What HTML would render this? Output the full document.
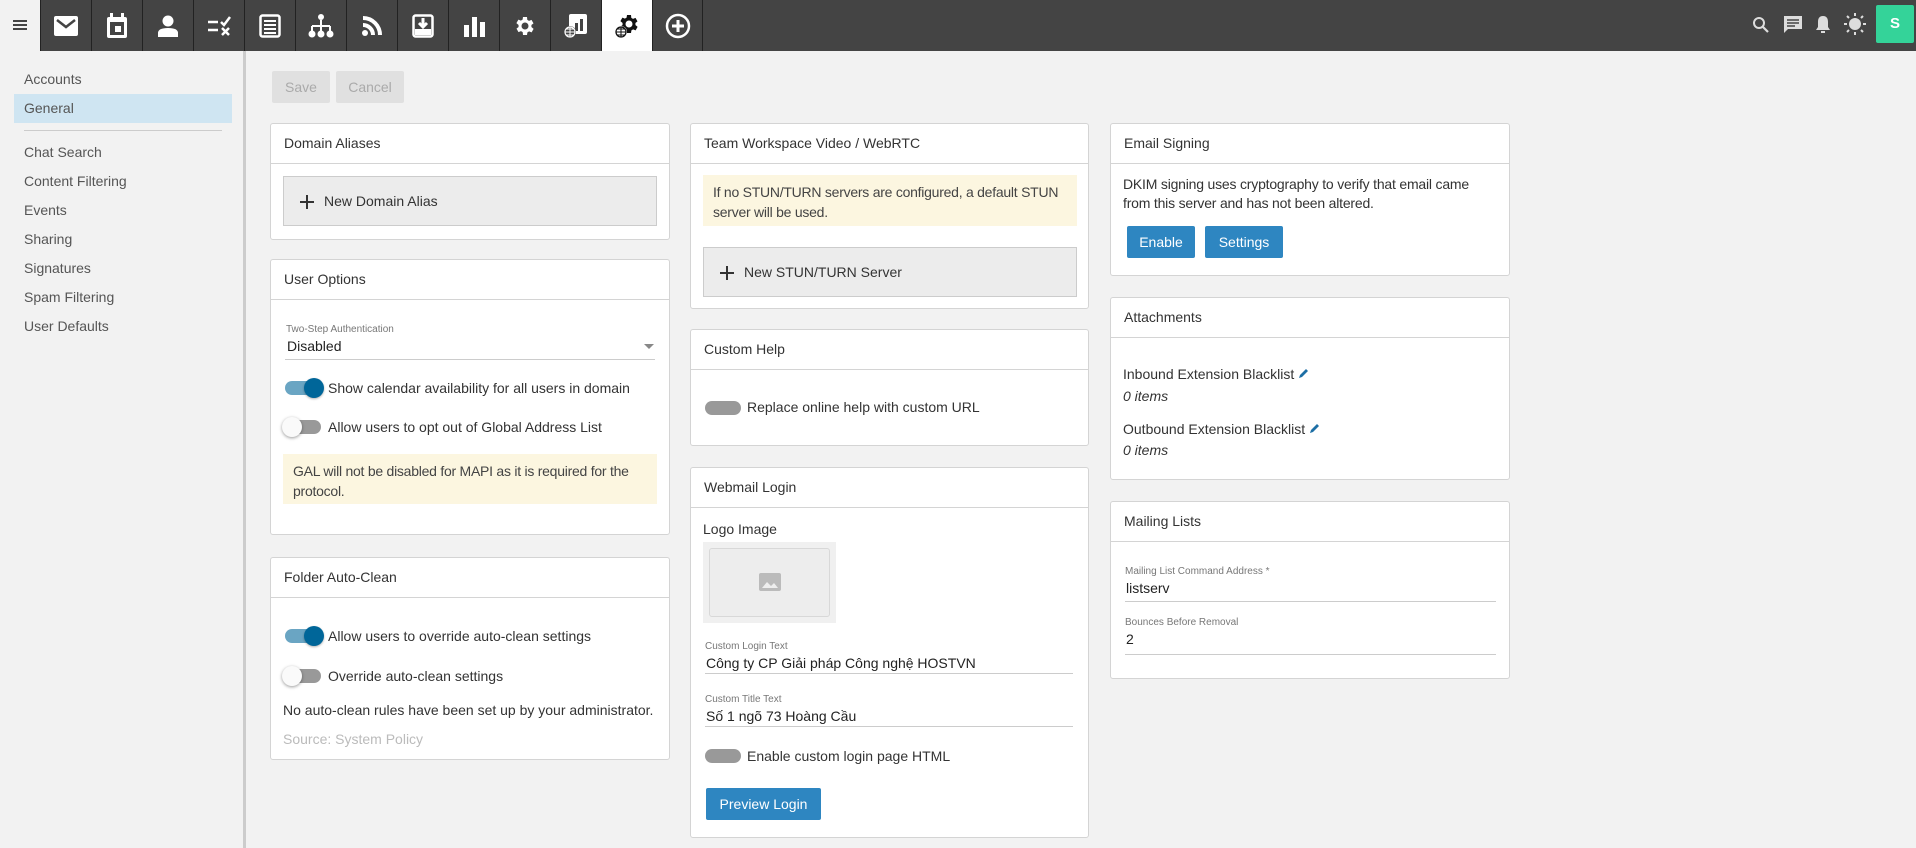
<!DOCTYPE html>
<html><head><meta charset="utf-8"><style>
*{box-sizing:border-box;margin:0;padding:0}
body{width:1916px;height:848px;overflow:hidden;background:#f2f2f2;font-family:"Liberation Sans","Noto Sans CJK SC",sans-serif;color:#333;font-size:14px;position:relative}
.top{position:absolute;left:0;top:0;width:1916px;height:51px;background:#444}
.ham{position:absolute;left:0;top:0;width:40px;height:51px;background:#f2f2f2}
.tab{position:absolute;top:0;width:51px;height:51px;border-left:1px solid #222;display:flex;align-items:center;justify-content:center}
.tab.act{background:#fff}
.side{position:absolute;left:0;top:51px;width:246px;height:797px;background:#f2f2f2;border-right:3px solid #ccc}
.si{position:absolute;left:24px;font-size:14px;color:#555;line-height:16px}
.btn{position:absolute;height:32px;line-height:32px;text-align:center;font-size:14px;border-radius:2px}
.card{position:absolute;background:#fff;border:1px solid #d4d4d4;border-radius:3px}
.card .h{height:40px;line-height:39px;padding-left:13px;border-bottom:1px solid #d4d4d4;font-size:14px;color:#333}
.a{position:absolute}
.add{position:absolute;background:#ececec;border:1px solid #ccc;height:50px;line-height:48px;padding-left:40px;font-size:14px;color:#333}
.add svg{position:absolute;left:16px;top:18px}
.note{position:absolute;background:#fcf6e0;font-size:14px;line-height:20px;padding:7px 10px;color:#444;letter-spacing:-0.25px}
.tg{position:absolute;width:36px;height:14px;border-radius:7px;background:#999}
.tg.on{background:#6aa5c3}
.tg.on:after{content:"";position:absolute;right:-3px;top:-3px;width:20px;height:20px;border-radius:50%;background:#006699;box-shadow:0 1px 2px rgba(0,0,0,.3)}
.tg.off:after{content:"";position:absolute;left:-3px;top:-3px;width:20px;height:20px;border-radius:50%;background:#fafafa;box-shadow:0 1px 3px rgba(0,0,0,.4)}
.lbl{position:absolute;font-size:10px;color:#777}
.val{position:absolute;font-size:14px;color:#222}
.ul{position:absolute;height:1px;background:#ccc}
.blue{background:#2e86c1;color:#fff}
</style></head><body>
<div class="top">
<div class="ham"><div style="position:absolute;left:13px;top:20px;width:14px;height:2px;background:#444;box-shadow:0 4px 0 #444,0 8px 0 #444"></div></div>
<div class="tab" style="left:40px"><svg width="26" height="22" viewBox="0 0 26 22"><rect x="1" y="1" width="24" height="20" rx="2" fill="#fff"/><path d="M4 5 L13 12 L22 5" stroke="#444" stroke-width="2.5" fill="none"/></svg></div>
<div class="tab" style="left:91px"><svg width="22" height="26" viewBox="0 0 22 26"><rect x="1" y="4" width="20" height="21" rx="2" fill="#fff"/><rect x="4" y="9" width="14" height="13" fill="#444"/><rect x="9" y="13" width="6" height="6" fill="#fff"/><rect x="4" y="0" width="3" height="5" fill="#fff"/><rect x="15" y="0" width="3" height="5" fill="#fff"/></svg></div>
<div class="tab" style="left:142px"><svg width="22" height="22" viewBox="0 0 22 22"><circle cx="11" cy="6" r="5.5" fill="#fff"/><path d="M1 22 V18 Q1 13 11 13 Q21 13 21 18 V22Z" fill="#fff"/></svg></div>
<div class="tab" style="left:193px"><svg width="26" height="22" viewBox="0 0 26 22"><path d="M2 7h10M2 15h10" stroke="#fff" stroke-width="2.5"/><path d="M15 7l3 3 6-8" stroke="#fff" stroke-width="2.5" fill="none"/><path d="M16 13l7 7M23 13l-7 7" stroke="#fff" stroke-width="2.5"/></svg></div>
<div class="tab" style="left:244px"><svg width="22" height="24" viewBox="0 0 22 24"><rect x="1.5" y="1.5" width="19" height="21" rx="2" fill="none" stroke="#fff" stroke-width="2.5"/><path d="M5 7h12M5 11h12M5 15h12M5 19h12" stroke="#fff" stroke-width="2"/></svg></div>
<div class="tab" style="left:295px"><svg width="26" height="24" viewBox="0 0 26 24"><circle cx="13" cy="3" r="3" fill="#fff"/><path d="M13 6v6M4 12h18M4 12v6M13 12v6M22 12v6" stroke="#fff" stroke-width="2"/><circle cx="4" cy="20" r="3.5" fill="#fff"/><circle cx="13" cy="20" r="3.5" fill="#fff"/><circle cx="22" cy="20" r="3.5" fill="#fff"/></svg></div>
<div class="tab" style="left:346px"><svg width="22" height="22" viewBox="0 0 22 22"><circle cx="4" cy="18" r="3" fill="#fff"/><path d="M2 10a10 10 0 0 1 10 10M2 3a17 17 0 0 1 17 17" stroke="#fff" stroke-width="4" fill="none"/></svg></div>
<div class="tab" style="left:397px"><svg width="22" height="24" viewBox="0 0 22 24"><rect x="1.5" y="1.5" width="19" height="21" rx="2" fill="none" stroke="#fff" stroke-width="2.5"/><rect x="3" y="15" width="16" height="6" fill="#fff"/><path d="M11 4v8M7 9l4 4 4-4" stroke="#fff" stroke-width="3" fill="none"/></svg></div>
<div class="tab" style="left:448px"><svg width="22" height="22" viewBox="0 0 22 22"><rect x="1" y="10" width="5" height="12" fill="#fff"/><rect x="9" y="2" width="5" height="20" fill="#fff"/><rect x="17" y="7" width="5" height="15" fill="#fff"/></svg></div>
<div class="tab" style="left:499px"><svg width="24" height="24" viewBox="0 0 24 24"><path fill="#fff" d="M19.4 13a7.5 7.5 0 0 0 0-2l2.1-1.6-2-3.5-2.5 1a7 7 0 0 0-1.7-1L15 3h-4l-.4 2.6a7 7 0 0 0-1.7 1l-2.5-1-2 3.5L6.6 11a7.5 7.5 0 0 0 0 2l-2.1 1.6 2 3.5 2.5-1a7 7 0 0 0 1.7 1L11 21h4l.4-2.6a7 7 0 0 0 1.7-1l2.5 1 2-3.5zM13 15.5a3.5 3.5 0 1 1 0-7 3.5 3.5 0 0 1 0 7z" transform="translate(-1 0)"/></svg></div>
<div class="tab" style="left:550px"><svg width="26" height="26" viewBox="0 0 26 26"><rect x="6" y="1" width="18" height="20" rx="2" fill="#fff"/><rect x="12" y="10" width="3" height="8" fill="#444"/><rect x="17" y="6" width="3" height="12" fill="#444"/><circle cx="7" cy="19" r="6" fill="#444"/><circle cx="7" cy="19" r="5" fill="none" stroke="#fff" stroke-width="1.2"/><path d="M2 19h10M7 14v10M3 16h8M3 22h8" stroke="#fff" stroke-width="1"/></svg></div>
<div class="tab act" style="left:601px"><svg width="28" height="28" viewBox="0 0 28 28"><path fill="#111" d="M22.4 13a7.5 7.5 0 0 0 0-2l2.1-1.6-2-3.5-2.5 1a7 7 0 0 0-1.7-1L18 3h-4l-.4 2.6a7 7 0 0 0-1.7 1l-2.5-1-2 3.5L9.6 11a7.5 7.5 0 0 0 0 2l-2.1 1.6 2 3.5 2.5-1a7 7 0 0 0 1.7 1L14 21h4l.4-2.6a7 7 0 0 0 1.7-1l2.5 1 2-3.5zM16 15.5a3.5 3.5 0 1 1 0-7 3.5 3.5 0 0 1 0 7z"/><circle cx="8" cy="20" r="6" fill="#fff"/><circle cx="8" cy="20" r="5" fill="none" stroke="#111" stroke-width="1.3"/><path d="M3 20h10M8 15v10M4 17h8M4 23h8" stroke="#111" stroke-width="1"/></svg></div>
<div class="tab" style="left:652px;border-right:1px solid #222"><svg width="26" height="26" viewBox="0 0 26 26"><circle cx="13" cy="13" r="11" fill="none" stroke="#fff" stroke-width="2.5"/><path d="M13 7v12M7 13h12" stroke="#fff" stroke-width="3"/></svg></div>
<svg class="a" style="left:1752px;top:16px" width="18" height="18" viewBox="0 0 18 18"><circle cx="7" cy="7" r="5" fill="none" stroke="#ddd" stroke-width="2"/><path d="M11 11l5 5" stroke="#ddd" stroke-width="2.2"/></svg>
<svg class="a" style="left:1783px;top:15px" width="20" height="20" viewBox="0 0 20 20"><path d="M1 1h18v13H5l-4 4z" fill="#ddd"/><path d="M4 5h12M4 8h12M4 11h8" stroke="#444" stroke-width="1.5"/></svg>
<svg class="a" style="left:1815px;top:15px" width="16" height="20" viewBox="0 0 16 20"><path d="M8 1c-4 0-5 3-5 6v5l-2 3h14l-2-3V7c0-3-1-6-5-6z" fill="#ddd"/><rect x="6" y="16" width="4" height="2" fill="#ddd"/></svg>
<svg class="a" style="left:1844px;top:13px" width="22" height="22" viewBox="0 0 22 22"><circle cx="11" cy="11" r="6" fill="#ddd"/><path d="M11 0v3M11 19v3M0 11h3M19 11h3M3 3l2 2M17 17l2 2M3 19l2-2M17 5l2-2" stroke="#ddd" stroke-width="2"/></svg>
<div class="a" style="left:1876px;top:5px;width:38px;height:38px;background:#34d399;border-radius:2px;color:#fff;font-weight:bold;font-size:15px;text-align:center;line-height:38px">S</div>
</div>

<div class="side">
<div class="si" style="top:20px">Accounts</div>
<div class="a" style="left:14px;top:43px;width:218px;height:29px;background:#cfe5f2"></div>
<div class="si" style="top:49px">General</div>
<div class="a" style="left:24px;top:79px;width:198px;height:1px;background:#ccc"></div>
<div class="si" style="top:93px">Chat Search</div>
<div class="si" style="top:122px">Content Filtering</div>
<div class="si" style="top:151px">Events</div>
<div class="si" style="top:180px">Sharing</div>
<div class="si" style="top:209px">Signatures</div>
<div class="si" style="top:238px">Spam Filtering</div>
<div class="si" style="top:267px">User Defaults</div>
</div>

<div class="btn" style="left:272px;top:71px;width:58px;background:#e0e0e0;color:#aaa">Save</div>
<div class="btn" style="left:336px;top:71px;width:68px;background:#e0e0e0;color:#aaa">Cancel</div>

<!-- column 1 -->
<div class="card" style="left:270px;top:123px;width:400px;height:117px"><div class="h">Domain Aliases</div>
<div class="add" style="left:12px;top:52px;width:374px"><svg width="14" height="14" viewBox="0 0 14 14"><path d="M7 0v14M0 7h14" stroke="#333" stroke-width="2"/></svg>New Domain Alias</div></div>

<div class="card" style="left:270px;top:259px;width:400px;height:276px"><div class="h">User Options</div>
<div class="lbl" style="left:15px;top:64px">Two-Step Authentication</div>
<div class="val" style="left:16px;top:78px">Disabled</div>
<div class="a" style="left:373px;top:84px;width:0;height:0;border-left:5px solid transparent;border-right:5px solid transparent;border-top:5px solid #888"></div>
<div class="ul" style="left:14px;top:99px;width:370px"></div>
<div class="tg on" style="left:14px;top:121px"></div>
<div class="val" style="left:57px;top:120px;color:#333">Show calendar availability for all users in domain</div>
<div class="tg off" style="left:14px;top:160px;background:#999"></div>
<div class="val" style="left:57px;top:159px;color:#333">Allow users to opt out of Global Address List</div>
<div class="note" style="left:12px;top:194px;width:374px;height:50px">GAL will not be disabled for MAPI as it is required for the protocol.</div>
</div>

<div class="card" style="left:270px;top:557px;width:400px;height:203px"><div class="h">Folder Auto-Clean</div>
<div class="tg on" style="left:14px;top:71px"></div>
<div class="val" style="left:57px;top:70px;color:#333">Allow users to override auto-clean settings</div>
<div class="tg off" style="left:14px;top:111px"></div>
<div class="val" style="left:57px;top:110px;color:#333">Override auto-clean settings</div>
<div class="val" style="left:12px;top:144px;color:#333">No auto-clean rules have been set up by your administrator.</div>
<div class="val" style="left:12px;top:173px;color:#bbb">Source: System Policy</div>
</div>

<!-- column 2 -->
<div class="card" style="left:690px;top:123px;width:399px;height:186px"><div class="h">Team Workspace Video / WebRTC</div>
<div class="note" style="left:12px;top:51px;width:374px;height:51px">If no STUN/TURN servers are configured, a default STUN server will be used.</div>
<div class="add" style="left:12px;top:123px;width:374px"><svg width="14" height="14" viewBox="0 0 14 14"><path d="M7 0v14M0 7h14" stroke="#333" stroke-width="2"/></svg>New STUN/TURN Server</div></div>

<div class="card" style="left:690px;top:329px;width:399px;height:117px"><div class="h">Custom Help</div>
<div class="tg" style="left:14px;top:71px"></div>
<div class="val" style="left:56px;top:69px;color:#333">Replace online help with custom URL</div></div>

<div class="card" style="left:690px;top:467px;width:399px;height:371px"><div class="h">Webmail Login</div>
<div class="val" style="left:12px;top:53px;color:#333">Logo Image</div>
<div class="a" style="left:12px;top:74px;width:133px;height:81px;background:#f0f0f0"></div>
<div class="a" style="left:18px;top:80px;width:121px;height:69px;background:#ededed;border:1px solid #d8d8d8;border-radius:3px"></div>
<svg class="a" style="left:68px;top:105px" width="22" height="18" viewBox="0 0 22 18"><rect width="22" height="18" rx="2" fill="#bbb"/><path d="M3 15l5-6 4 4 3-3 4 5z" fill="#eee"/></svg>
<div class="lbl" style="left:14px;top:173px">Custom Login Text</div>
<div class="val" style="left:15px;top:187px">Công ty CP Giải pháp Công nghệ HOSTVN</div>
<div class="ul" style="left:14px;top:205px;width:368px"></div>
<div class="lbl" style="left:14px;top:226px">Custom Title Text</div>
<div class="val" style="left:15px;top:240px">Số 1 ngõ 73 Hoàng Cầu</div>
<div class="ul" style="left:14px;top:258px;width:368px"></div>
<div class="tg" style="left:14px;top:281px"></div>
<div class="val" style="left:56px;top:280px;color:#333">Enable custom login page HTML</div>
<div class="btn blue" style="left:15px;top:320px;width:115px">Preview Login</div>
</div>

<!-- column 3 -->
<div class="card" style="left:1110px;top:123px;width:400px;height:153px"><div class="h">Email Signing</div>
<div class="val" style="left:12px;top:51px;line-height:19px;color:#333;width:368px;letter-spacing:-0.2px">DKIM signing uses cryptography to verify that email came from this server and has not been altered.</div>
<div class="btn blue" style="left:16px;top:102px;width:68px">Enable</div>
<div class="btn blue" style="left:94px;top:102px;width:78px">Settings</div></div>

<div class="card" style="left:1110px;top:297px;width:400px;height:183px"><div class="h">Attachments</div>
<div class="val" style="left:12px;top:68px;color:#333">Inbound Extension Blacklist <svg width="12" height="12" viewBox="0 0 12 12"><path d="M1 11l1-3 6-6 2 2-6 6z" fill="#1d6fa5"/></svg></div>
<div class="val" style="left:12px;top:90px;color:#333;font-style:italic">0 items</div>
<div class="val" style="left:12px;top:123px;color:#333">Outbound Extension Blacklist <svg width="12" height="12" viewBox="0 0 12 12"><path d="M1 11l1-3 6-6 2 2-6 6z" fill="#1d6fa5"/></svg></div>
<div class="val" style="left:12px;top:144px;color:#333;font-style:italic">0 items</div></div>

<div class="card" style="left:1110px;top:501px;width:400px;height:178px"><div class="h">Mailing Lists</div>
<div class="lbl" style="left:14px;top:64px">Mailing List Command Address *</div>
<div class="val" style="left:15px;top:78px">listserv</div>
<div class="ul" style="left:14px;top:99px;width:371px"></div>
<div class="lbl" style="left:14px;top:115px">Bounces Before Removal</div>
<div class="val" style="left:15px;top:129px">2</div>
<div class="ul" style="left:14px;top:152px;width:371px"></div></div>
</body></html>
